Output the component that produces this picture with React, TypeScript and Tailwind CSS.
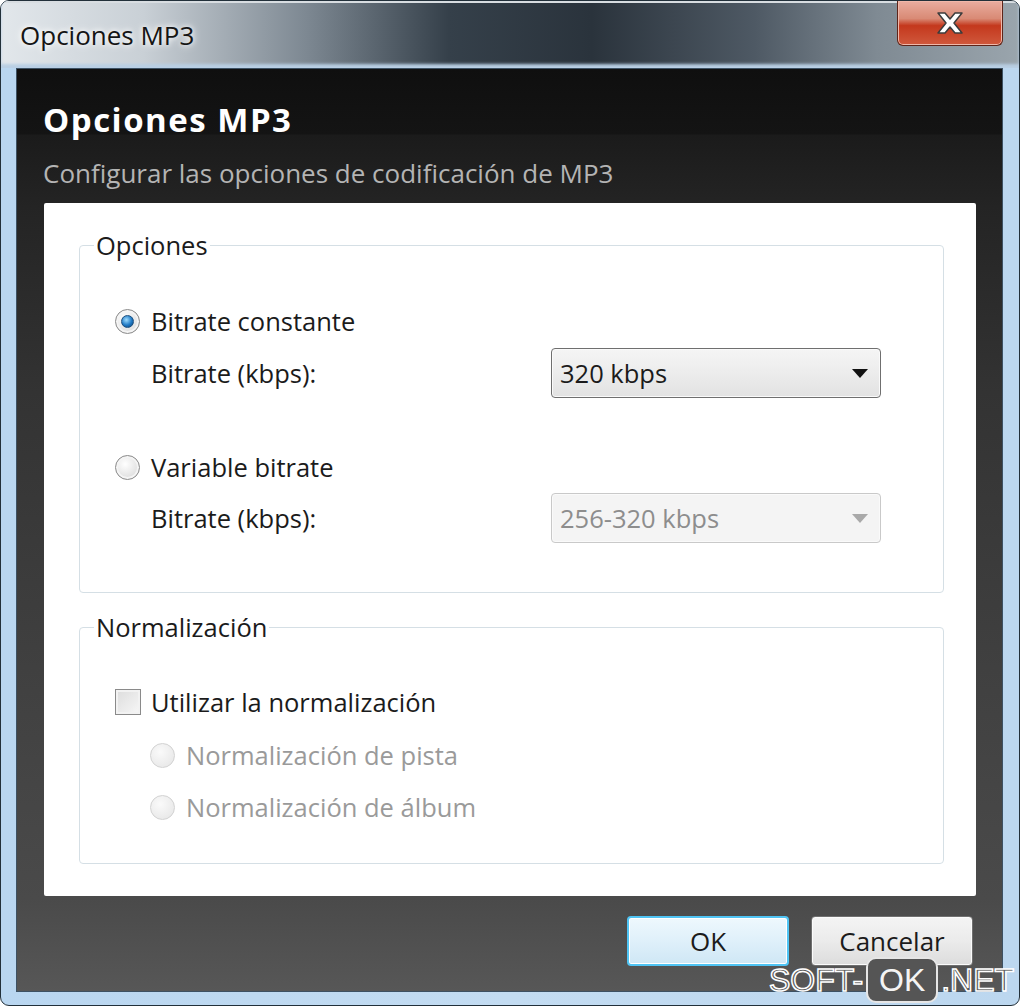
import clsx from "clsx";

function Radio({ checked, disabled }: { checked?: boolean; disabled?: boolean }) {
  return (
    <span
      className={clsx(
        "flex h-[25px] w-[25px] shrink-0 items-center justify-center rounded-full border",
        disabled
          ? "border-[#d2d2d2] bg-[radial-gradient(circle_at_40%_35%,#fafafa,#e4e4e4)]"
          : "border-[#8a8a8a] bg-[radial-gradient(circle_at_40%_35%,#ffffff,#d2d2d2)] shadow-[inset_0_0_0_2px_#f4f4f4]"
      )}
    >
      {checked && (
        <span className="h-[13px] w-[13px] rounded-full border border-[#1b4e7e] bg-[radial-gradient(circle_at_40%_35%,#9edcff,#1f79c4_55%,#0d3f70)]" />
      )}
    </span>
  );
}

function Select({ value, disabled }: { value: string; disabled?: boolean }) {
  return (
    <div
      className={clsx(
        "flex h-[50px] w-[330px] items-center justify-between rounded-[4px] border pl-[8px] pr-[12px] shadow-[inset_0_0_0_1px_#fafafa]",
        disabled
          ? "border-[#c9c9c9] bg-[#f4f4f4] text-[#8d8d8d]"
          : "border-[#6f6f6f] bg-[linear-gradient(#f5f5f5,#ececec_50%,#e2e2e2)] text-[#1b1b1b]"
      )}
    >
      <span>{value}</span>
      <svg width="16" height="9" viewBox="0 0 16 9">
        <polygon points="0,0 16,0 8,9" fill={disabled ? "#a9a9a9" : "#111"} />
      </svg>
    </div>
  );
}

export default function App() {
  return (
    <div className="relative h-[1006px] w-[1020px] bg-white font-['Open_Sans','Noto_Sans',sans-serif] text-[25.5px] text-[#1b1b1b]">
      <div className="flex h-full flex-col overflow-hidden rounded-[9px] border border-[#22303a] bg-[linear-gradient(90deg,#b9d6f0,#c3dcf2_50%,#bcd7ef)]">
        {/* title bar */}
        <div className="flex h-[67px] shrink-0 items-start justify-between bg-[linear-gradient(90deg,#e2e7eb,#c9d0d6_14%,#7d8892_30%,#35404a_44%,#2a333c_58%,#4e5964_74%,#7f8a93_86%,#9aa5ad)] pl-[19px] pr-[16px] shadow-[inset_0_2px_0_#d8dde1,inset_0_-4px_3px_#b9cfe4]">
          <span className="pt-[17px] text-[26px] leading-[34px] text-[#151515] [text-shadow:0_0_10px_#ffffff,0_0_5px_#ffffff]">
            Opciones MP3
          </span>
          <div className="flex h-[45px] w-[106px] items-center justify-center rounded-b-[6px] border border-t-0 border-[#5e2419] bg-[linear-gradient(#e9ada0,#d98a75_40%,#c4381d_56%,#d0593d)] shadow-[inset_0_0_0_1px_#f0b8aa]">
            <svg width="34" height="26" viewBox="0 0 34 26">
              <path
                d="M5 3 L12 3 L17 9 L22 3 L29 3 L21 13 L29 23 L22 23 L17 17 L12 23 L5 23 L13 13 Z"
                fill="#ffffff"
                stroke="#3c3c3c"
                strokeWidth="1.5"
                strokeLinejoin="round"
              />
            </svg>
          </div>
        </div>

        {/* content */}
        <div className="mb-[13px] ml-[15px] mr-[16px] flex flex-1 flex-col border border-[#3d5163] bg-[linear-gradient(#0f0f0f,#141414_7%,#1b1b1b_7.2%,#242424_15%,#333333_35%,#404040_65%,#4a4a4a_90%,#575757)]">
          <div className="pl-[26px] pt-[33px]">
            <div className="text-[33px] font-bold leading-[36px] tracking-[1.5px] text-white">Opciones MP3</div>
            <div className="mt-[20px] text-[26px] leading-[30px] text-[#b4b4b4]">
              Configurar las opciones de codificación de MP3
            </div>
          </div>

          <div className="ml-[27px] mr-[26px] mt-[15px] rounded-[2px] bg-white pb-[32px] pl-[35px] pr-[32px] pt-[27px]">
            <fieldset className="rounded-[4px] border border-[#d5dfe5] pb-[49px]">
              <legend className="ml-[14px] px-[2px] leading-[30px]">Opciones</legend>
              <div className="flex flex-col pl-[35px] pt-[44px]">
                <label className="flex h-[34px] items-center gap-[11px]">
                  <Radio checked />
                  <span>Bitrate constante</span>
                </label>
                <div className="mt-[10px] flex items-center">
                  <span className="w-[436px] pl-[36px]">Bitrate (kbps):</span>
                  <Select value="320 kbps" />
                </div>
                <label className="mt-[52px] flex h-[34px] items-center gap-[11px]">
                  <Radio />
                  <span>Variable bitrate</span>
                </label>
                <div className="mt-[9px] flex items-center">
                  <span className="w-[436px] pl-[36px]">Bitrate (kbps):</span>
                  <Select value="256-320 kbps" disabled />
                </div>
              </div>
            </fieldset>

            <fieldset className="mt-[19px] rounded-[4px] border border-[#d5dfe5] pb-[39px]">
              <legend className="ml-[14px] px-[2px] leading-[30px]">Normalización</legend>
              <div className="flex flex-col gap-[19px] pl-[35px] pt-[43px]">
                <label className="flex h-[34px] items-center gap-[10px]">
                  <span className="h-[26px] w-[26px] shrink-0 border border-[#8a8a8a] bg-[linear-gradient(135deg,#dcdcdc,#f7f7f7)] shadow-[inset_0_0_0_2px_#f2f2f2]" />
                  <span>Utilizar la normalización</span>
                </label>
                <label className="flex h-[34px] items-center gap-[11px] pl-[35px] text-[#9a9a9a]">
                  <Radio disabled />
                  <span>Normalización de pista</span>
                </label>
                <label className="-mt-[1px] flex h-[34px] items-center gap-[11px] pl-[35px] text-[#9a9a9a]">
                  <Radio disabled />
                  <span>Normalización de álbum</span>
                </label>
              </div>
            </fieldset>
          </div>

          <div className="flex flex-1 items-start justify-end gap-[22px] pr-[29px] pt-[20px]">
            <button className="flex h-[50px] w-[162px] items-center justify-center rounded-[4px] border-2 border-[#4fc4f4] bg-[linear-gradient(#eef8fd,#dff0fa_50%,#cfe7f5)] text-[26px] shadow-[inset_0_0_0_1px_#ffffff]">
              OK
            </button>
            <button className="flex h-[50px] w-[162px] items-center justify-center rounded-[4px] border border-[#707070] bg-[linear-gradient(#f4f4f4,#ebebeb_50%,#dcdcdc)] text-[26px] shadow-[inset_0_0_0_1px_#fbfbfb]">
              Cancelar
            </button>
          </div>
        </div>
      </div>

      {/* watermark */}
      <div className="absolute left-[769px] top-[957px] flex items-center font-['Liberation_Sans',Arial,sans-serif] text-[32px] leading-[44px] text-[#5a5a5a] [-webkit-text-stroke:1.5px_#ffffff]">
        <span>SOFT-</span>
        <span className="mx-[3px] flex h-[46px] w-[72px] items-center justify-center rounded-[10px] border-2 border-[#e6e6e6] bg-[#555555] text-[#f4f4f4] [-webkit-text-stroke:0px]">
          OK
        </span>
        <span>.NET</span>
      </div>
    </div>
  );
}
